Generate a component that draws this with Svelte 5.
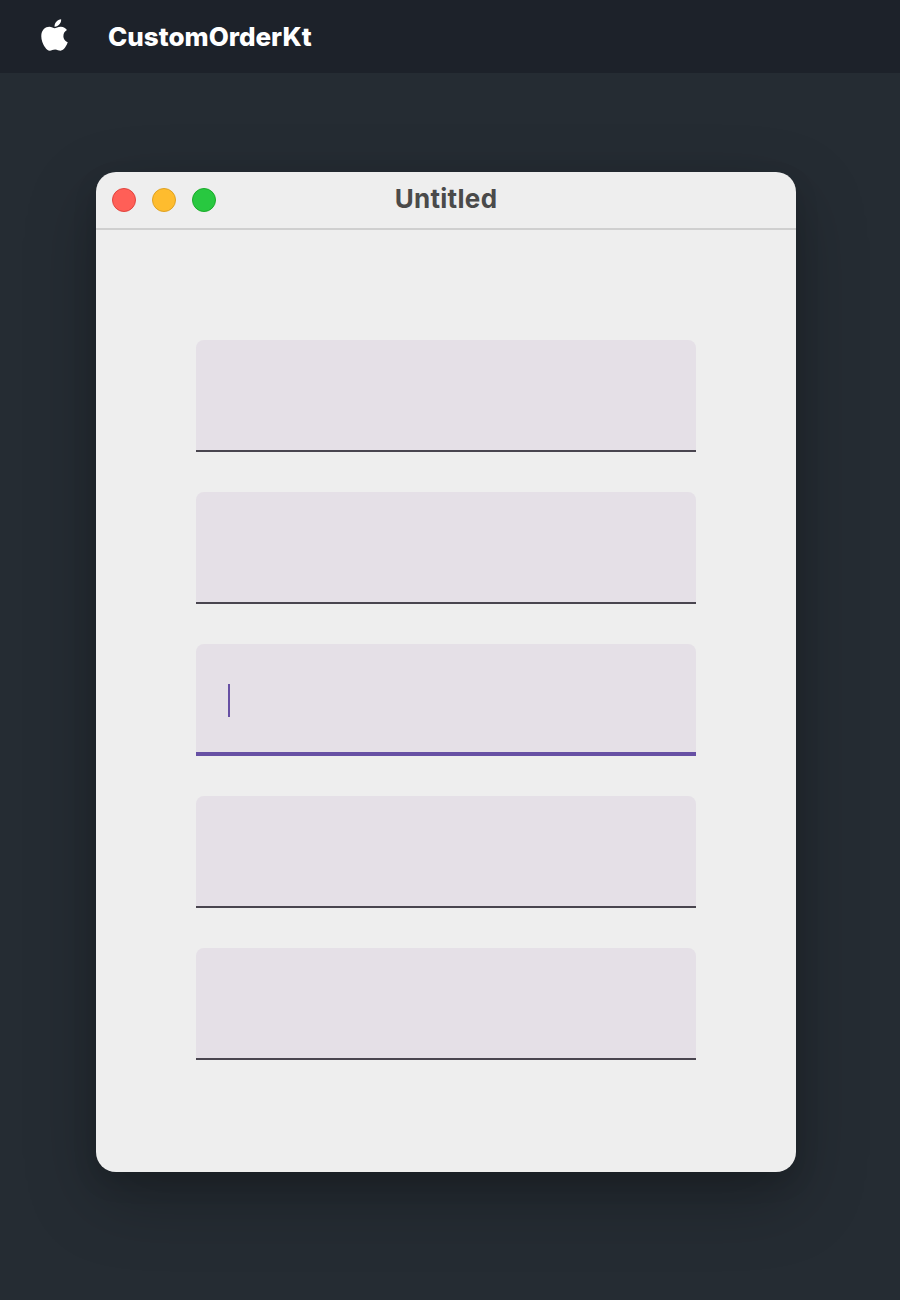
<script lang="ts">
  const fields = [false, false, true, false, false];
</script>

<header class="menubar">
  <svg class="apple" viewBox="0 0 384 512" aria-hidden="true">
    <path d="M318.7 268.7c-.2-36.7 16.4-64.4 50-84.8-18.8-26.9-47.2-41.7-84.7-44.6-35.5-2.8-74.3 20.7-88.5 20.7-15 0-49.4-19.7-76.4-19.7C63.3 141.2 4 184.8 4 273.5q0 39.3 14.4 81.2c12.8 36.7 59 126.7 107.2 125.2 25.2-.6 43-17.9 75.8-17.9 31.8 0 48.3 17.9 76.4 17.9 48.6-.7 90.4-82.5 102.6-119.3-65.2-30.7-61.7-90-61.7-91.9zm-56.6-164.2c27.3-32.4 24.8-61.9 24-72.5-24.1 1.4-52 16.4-67.9 34.9-17.5 19.8-27.8 44.3-25.6 71.9 26.1 2 49.9-11.4 69.5-34.3z" />
  </svg>
  <span class="app-name">CustomOrderKt</span>
</header>

<main class="desktop">
  <section class="window">
    <div class="titlebar">
      <div class="lights">
        <span class="light red"></span>
        <span class="light yellow"></span>
        <span class="light green"></span>
      </div>
      <span class="title">Untitled</span>
    </div>
    <div class="content">
      {#each fields as focused}
        <div class="field" class:focused>
          {#if focused}
            <span class="caret"></span>
          {/if}
        </div>
      {/each}
    </div>
  </section>
</main>

<style>
  :global(body) {
    background-color: #252c33;
    font-family: Inter, "Liberation Sans", sans-serif;
  }
  .menubar {
    height: 73px;
    background-color: #1d222a;
    display: flex;
    align-items: center;
    padding-left: 41px;
    gap: 40px;
  }
  .apple {
    width: 27px;
    height: 36px;
    fill: #fff;
    display: block;
    margin-top: -4px;
  }
  .app-name {
    color: #fff;
    font-size: 26px;
    font-weight: 800;
    margin-top: 0;
  }
  .desktop {
    padding: 99px 0 128px 96px;
  }
  .window {
    width: 700px;
    height: 1000px;
    background-color: #eeeeee;
    border-radius: 20px;
    box-shadow: 0 26px 70px rgba(0, 0, 0, 0.26), 0 10px 24px rgba(0, 0, 0, 0.12);
    display: flex;
    flex-direction: column;
    overflow: hidden;
  }
  .titlebar {
    height: 56px;
    flex-shrink: 0;
    border-bottom: 2px solid #cfcfcf;
    display: flex;
    align-items: center;
    justify-content: center;
    position: relative;
  }
  .lights {
    position: absolute;
    left: 16px;
    top: 16px;
    display: flex;
    gap: 16px;
  }
  .light {
    width: 24px;
    height: 24px;
    border-radius: 50%;
    box-sizing: border-box;
    border: 1px solid;
  }
  .red { background-color: #ff5f57; border-color: #e0443e; }
  .yellow { background-color: #febc2e; border-color: #dea123; }
  .green { background-color: #28c840; border-color: #1aab29; }
  .title {
    color: #4a4a4a;
    font-size: 26px;
    font-weight: 700;
    letter-spacing: 0.3px;
    margin-top: -3px;
  }
  .content {
    flex: 1;
    display: flex;
    flex-direction: column;
    align-items: center;
    padding-top: 110px;
    gap: 40px;
  }
  .field {
    width: 500px;
    height: 112px;
    box-sizing: border-box;
    background-color: #e5e0e7;
    border-radius: 8px 8px 0 0;
    border-bottom: 2px solid #49454f;
    position: relative;
  }
  .field.focused {
    border-bottom: 4px solid #6750a4;
  }
  .caret {
    position: absolute;
    left: 32px;
    top: 40px;
    width: 2px;
    height: 33px;
    background-color: #6750a4;
  }
</style>
